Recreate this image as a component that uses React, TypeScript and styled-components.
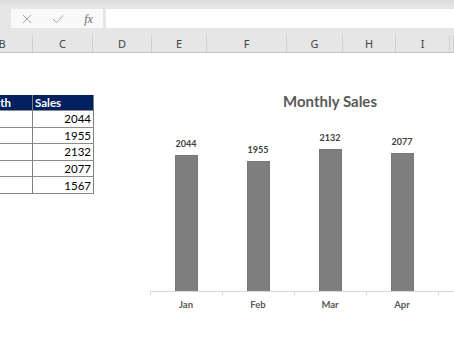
import React from "react";
import styled, { createGlobalStyle } from "styled-components";

const GlobalStyle = createGlobalStyle`
  html, body {
    margin: 0;
    padding: 0;
    background: #ffffff;
  }
  * {
    box-sizing: border-box;
  }
`;

const Page = styled.div`
  width: 454px;
  height: 341px;
  overflow: hidden;
  background: #ffffff;
  display: flex;
  flex-direction: column;
  font-family: "Lato", "Liberation Sans", sans-serif;
`;

const TopBar = styled.div`
  display: flex;
  padding: 9px 0 7px 11px;
  background: linear-gradient(#dcdcdc 0px, #e6e6e6 6px, #e6e6e6 100%);
`;

const IconBox = styled.div`
  width: 92px;
  height: 19px;
  background: #f9f9f9;
  display: grid;
  grid-template-columns: repeat(3, 31px);
  align-items: center;
  justify-items: center;
`;

const Fx = styled.span`
  font-family: "Liberation Serif", serif;
  font-style: italic;
  font-size: 12px;
  color: #6b6b6b;
  line-height: 1;
`;

const FormulaInput = styled.div`
  flex: 1;
  height: 19px;
  margin-left: 3px;
  background: #ffffff;
`;

const ColumnHeaders = styled.div`
  display: grid;
  grid-template-columns: 33px 60px 59px 55px 80px 56px 53px 54px 1fr;
  height: 18px;
  background: #e6e6e6;
  border-bottom: 1px solid #c4c4c4;
`;

const ColHead = styled.div<{ $shift?: number }>`
  display: flex;
  align-items: center;
  justify-content: center;
  padding-right: ${(p) => p.$shift ?? 0}px;
  border-right: 1px solid #cfcfcf;
  font-family: "Noto Sans", "Liberation Sans", sans-serif;
  font-size: 11px;
  color: #444444;
  white-space: nowrap;
`;

const Body = styled.div`
  flex: 1;
  display: flex;
  align-items: flex-start;
`;

const Table = styled.div`
  margin-top: 42px;
  width: 94px;
  display: grid;
  grid-template-columns: 33px 61px;
  flex-shrink: 0;
`;

const Cell = styled.div<{ $head?: boolean; $right?: boolean }>`
  height: ${(p) => (p.$head ? 16 : 16.6)}px;
  display: flex;
  align-items: center;
  justify-content: ${(p) => (p.$right ? "flex-end" : "flex-start")};
  overflow: hidden;
  white-space: nowrap;
  padding: ${(p) => (p.$right ? "0 2px 0 0" : "0 0 0 2px")};
  font-size: 11.5px;
  background: ${(p) => (p.$head ? "#002060" : "#ffffff")};
  color: ${(p) => (p.$head ? "#ffffff" : "#000000")};
  font-weight: ${(p) => (p.$head ? 700 : 400)};
  border-right: 1px solid #7f7f7f;
  border-bottom: 1px solid #8c8c8c;
`;

const MonthHead = styled(Cell)`
  justify-content: flex-end;
  padding: 0 21px 0 0;
`;

const Chart = styled.div`
  margin-left: 56px;
  margin-top: 39px;
  width: 360px;
  flex-shrink: 0;
  display: flex;
  flex-direction: column;
`;

const ChartTitle = styled.div`
  text-align: center;
  font-size: 15px;
  font-weight: 700;
  line-height: 18px;
  color: #595959;
`;

const Plot = styled.div`
  height: 182px;
  display: grid;
  grid-template-columns: repeat(5, 72px);
  border-bottom: 1px solid #d9d9d9;
`;

const Category = styled.div`
  display: flex;
  flex-direction: column;
  align-items: center;
  justify-content: flex-end;
`;

const ValueLabel = styled.div`
  font-size: 9px;
  font-weight: 700;
  line-height: 11px;
  color: #404040;
  margin-bottom: 6px;
`;

const Bar = styled.div`
  width: 23px;
  background: #7f7f7f;
  border: 1px solid #777777;
  border-bottom: none;
`;

const AxisLabels = styled.div`
  display: grid;
  grid-template-columns: repeat(5, 72px);
`;

const AxisLabel = styled.div`
  position: relative;
  text-align: center;
  padding-top: 7px;
  font-size: 9.5px;
  font-weight: 700;
  line-height: 11px;
  color: #595959;

  &::before {
    content: "";
    position: absolute;
    left: 0;
    top: 0;
    width: 1px;
    height: 3px;
    background: #d9d9d9;
  }
`;

const data = [
  { month: "Jan", sales: 2044 },
  { month: "Feb", sales: 1955 },
  { month: "Mar", sales: 2132 },
  { month: "Apr", sales: 2077 },
  { month: "May", sales: 1567 },
];

const columns = ["B", "C", "D", "E", "F", "G", "H", "I", "J"];

const CrossIcon = () => (
  <svg width="10" height="10" viewBox="0 0 10 10">
    <path d="M1 1 L9 9 M9 1 L1 9" stroke="#a8a8a8" strokeWidth="1" fill="none" />
  </svg>
);

const CheckIcon = () => (
  <svg width="12" height="10" viewBox="0 0 12 10">
    <path d="M1 5 L4.5 8.5 L11 1.5" stroke="#a8a8a8" strokeWidth="1" fill="none" />
  </svg>
);

const App: React.FC = () => {
  return (
    <Page>
      <GlobalStyle />
      <TopBar>
        <IconBox>
          <CrossIcon />
          <CheckIcon />
          <Fx>fx</Fx>
        </IconBox>
        <FormulaInput />
      </TopBar>

      <ColumnHeaders>
        {columns.map((c, i) => (
          <ColHead key={c} $shift={i === 0 ? 28 : 0}>
            {i === columns.length - 1 ? "" : c}
          </ColHead>
        ))}
      </ColumnHeaders>

      <Body>
        {/* Sales table */}
        <Table>
          <MonthHead $head>Month</MonthHead>
          <Cell $head>Sales</Cell>
          {data.map((d) => (
            <React.Fragment key={d.month}>
              <Cell />
              <Cell $right>{d.sales}</Cell>
            </React.Fragment>
          ))}
        </Table>

        {/* Column chart */}
        <Chart>
          <ChartTitle>Monthly Sales</ChartTitle>
          <Plot>
            {data.map((d) => (
              <Category key={d.month}>
                <ValueLabel>{d.sales}</ValueLabel>
                <Bar style={{ height: Math.round((d.sales * 136) / 2044) }} />
              </Category>
            ))}
          </Plot>
          <AxisLabels>
            {data.map((d) => (
              <AxisLabel key={d.month}>{d.month}</AxisLabel>
            ))}
          </AxisLabels>
        </Chart>
      </Body>
    </Page>
  );
};

export default App;
